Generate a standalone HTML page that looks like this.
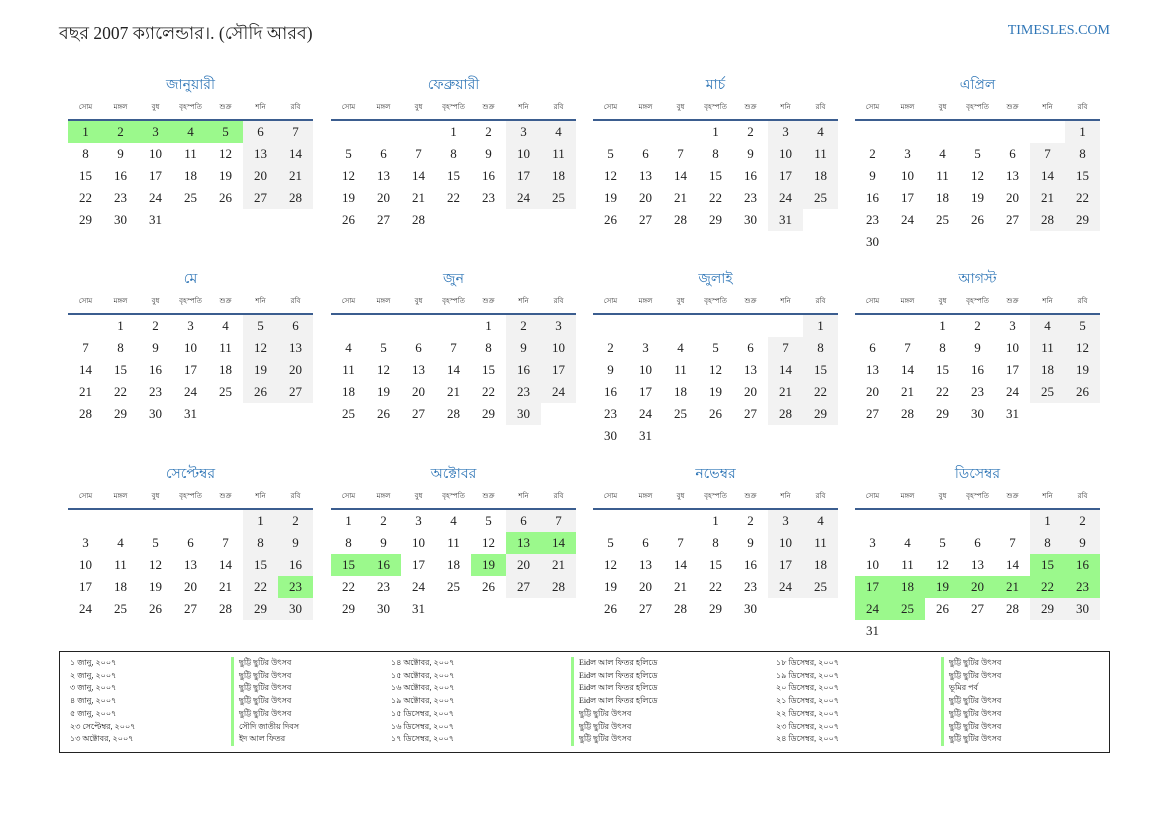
<!DOCTYPE html>
<html><head><meta charset="utf-8"><style>
body{margin:0;width:1169px;height:827px;background:#fff;position:relative;font-family:"Liberation Serif","Noto Serif CJK SC",serif;color:#222;overflow:hidden}
.t{position:absolute;left:59px;top:21px;font-size:17.5px;color:#222}
.s{position:absolute;right:59px;top:23px;font-size:14px;color:#2e75b6;font-family:"Liberation Serif",serif}
.m{position:absolute;width:245px}
.m h2{margin:0;height:20px;line-height:20px;text-align:center;font-size:14px;font-weight:normal;color:#2e75b6;font-family:"Liberation Sans",sans-serif}
table{border-collapse:collapse;table-layout:fixed;width:245px}
th{height:25px;font-size:7px;font-weight:normal;border-bottom:2px solid #3b5d8f;padding:0;vertical-align:middle;font-family:"Liberation Sans",sans-serif;color:#333}
td{width:35px;height:22px;padding:0;text-align:center;font-size:13px;vertical-align:middle}
td.w{background:#f2f2f2}td.g{background:#9bf98c}
.l{position:absolute;left:59px;top:651px;width:1049px;height:100px;border:1px solid #222;font-size:8px;font-family:"Liberation Serif",sans-serif}
.c{position:absolute;top:5px;line-height:12.7px}
.b div{border-left:3px solid #9bf98c;padding-left:5px}
</style></head><body>
<div class="t">বছর 2007 ক্যালেন্ডার।. (সৌদি আরব)</div>
<div class="s">TIMESLES.COM</div>

<div class="m" style="left:68px;top:74px"><h2>জানুয়ারী</h2><table><tr><th>সোম</th><th>মঙ্গল</th><th>বুধ</th><th>বৃহস্পতি</th><th>শুক্র</th><th>শনি</th><th>রবি</th></tr>
<tr><td class="g">1</td><td class="g">2</td><td class="g">3</td><td class="g">4</td><td class="g">5</td><td class="w">6</td><td class="w">7</td></tr>
<tr><td>8</td><td>9</td><td>10</td><td>11</td><td>12</td><td class="w">13</td><td class="w">14</td></tr>
<tr><td>15</td><td>16</td><td>17</td><td>18</td><td>19</td><td class="w">20</td><td class="w">21</td></tr>
<tr><td>22</td><td>23</td><td>24</td><td>25</td><td>26</td><td class="w">27</td><td class="w">28</td></tr>
<tr><td>29</td><td>30</td><td>31</td><td></td><td></td><td></td><td></td></tr></table></div>

<div class="m" style="left:331px;top:74px"><h2>ফেব্রুয়ারী</h2><table><tr><th>সোম</th><th>মঙ্গল</th><th>বুধ</th><th>বৃহস্পতি</th><th>শুক্র</th><th>শনি</th><th>রবি</th></tr>
<tr><td></td><td></td><td></td><td>1</td><td>2</td><td class="w">3</td><td class="w">4</td></tr>
<tr><td>5</td><td>6</td><td>7</td><td>8</td><td>9</td><td class="w">10</td><td class="w">11</td></tr>
<tr><td>12</td><td>13</td><td>14</td><td>15</td><td>16</td><td class="w">17</td><td class="w">18</td></tr>
<tr><td>19</td><td>20</td><td>21</td><td>22</td><td>23</td><td class="w">24</td><td class="w">25</td></tr>
<tr><td>26</td><td>27</td><td>28</td><td></td><td></td><td></td><td></td></tr></table></div>

<div class="m" style="left:593px;top:74px"><h2>মার্চ</h2><table><tr><th>সোম</th><th>মঙ্গল</th><th>বুধ</th><th>বৃহস্পতি</th><th>শুক্র</th><th>শনি</th><th>রবি</th></tr>
<tr><td></td><td></td><td></td><td>1</td><td>2</td><td class="w">3</td><td class="w">4</td></tr>
<tr><td>5</td><td>6</td><td>7</td><td>8</td><td>9</td><td class="w">10</td><td class="w">11</td></tr>
<tr><td>12</td><td>13</td><td>14</td><td>15</td><td>16</td><td class="w">17</td><td class="w">18</td></tr>
<tr><td>19</td><td>20</td><td>21</td><td>22</td><td>23</td><td class="w">24</td><td class="w">25</td></tr>
<tr><td>26</td><td>27</td><td>28</td><td>29</td><td>30</td><td class="w">31</td><td></td></tr></table></div>

<div class="m" style="left:855px;top:74px"><h2>এপ্রিল</h2><table><tr><th>সোম</th><th>মঙ্গল</th><th>বুধ</th><th>বৃহস্পতি</th><th>শুক্র</th><th>শনি</th><th>রবি</th></tr>
<tr><td></td><td></td><td></td><td></td><td></td><td></td><td class="w">1</td></tr>
<tr><td>2</td><td>3</td><td>4</td><td>5</td><td>6</td><td class="w">7</td><td class="w">8</td></tr>
<tr><td>9</td><td>10</td><td>11</td><td>12</td><td>13</td><td class="w">14</td><td class="w">15</td></tr>
<tr><td>16</td><td>17</td><td>18</td><td>19</td><td>20</td><td class="w">21</td><td class="w">22</td></tr>
<tr><td>23</td><td>24</td><td>25</td><td>26</td><td>27</td><td class="w">28</td><td class="w">29</td></tr>
<tr><td>30</td><td></td><td></td><td></td><td></td><td></td><td></td></tr></table></div>

<div class="m" style="left:68px;top:268px"><h2>মে</h2><table><tr><th>সোম</th><th>মঙ্গল</th><th>বুধ</th><th>বৃহস্পতি</th><th>শুক্র</th><th>শনি</th><th>রবি</th></tr>
<tr><td></td><td>1</td><td>2</td><td>3</td><td>4</td><td class="w">5</td><td class="w">6</td></tr>
<tr><td>7</td><td>8</td><td>9</td><td>10</td><td>11</td><td class="w">12</td><td class="w">13</td></tr>
<tr><td>14</td><td>15</td><td>16</td><td>17</td><td>18</td><td class="w">19</td><td class="w">20</td></tr>
<tr><td>21</td><td>22</td><td>23</td><td>24</td><td>25</td><td class="w">26</td><td class="w">27</td></tr>
<tr><td>28</td><td>29</td><td>30</td><td>31</td><td></td><td></td><td></td></tr></table></div>

<div class="m" style="left:331px;top:268px"><h2>জুন</h2><table><tr><th>সোম</th><th>মঙ্গল</th><th>বুধ</th><th>বৃহস্পতি</th><th>শুক্র</th><th>শনি</th><th>রবি</th></tr>
<tr><td></td><td></td><td></td><td></td><td>1</td><td class="w">2</td><td class="w">3</td></tr>
<tr><td>4</td><td>5</td><td>6</td><td>7</td><td>8</td><td class="w">9</td><td class="w">10</td></tr>
<tr><td>11</td><td>12</td><td>13</td><td>14</td><td>15</td><td class="w">16</td><td class="w">17</td></tr>
<tr><td>18</td><td>19</td><td>20</td><td>21</td><td>22</td><td class="w">23</td><td class="w">24</td></tr>
<tr><td>25</td><td>26</td><td>27</td><td>28</td><td>29</td><td class="w">30</td><td></td></tr></table></div>

<div class="m" style="left:593px;top:268px"><h2>জুলাই</h2><table><tr><th>সোম</th><th>মঙ্গল</th><th>বুধ</th><th>বৃহস্পতি</th><th>শুক্র</th><th>শনি</th><th>রবি</th></tr>
<tr><td></td><td></td><td></td><td></td><td></td><td></td><td class="w">1</td></tr>
<tr><td>2</td><td>3</td><td>4</td><td>5</td><td>6</td><td class="w">7</td><td class="w">8</td></tr>
<tr><td>9</td><td>10</td><td>11</td><td>12</td><td>13</td><td class="w">14</td><td class="w">15</td></tr>
<tr><td>16</td><td>17</td><td>18</td><td>19</td><td>20</td><td class="w">21</td><td class="w">22</td></tr>
<tr><td>23</td><td>24</td><td>25</td><td>26</td><td>27</td><td class="w">28</td><td class="w">29</td></tr>
<tr><td>30</td><td>31</td><td></td><td></td><td></td><td></td><td></td></tr></table></div>

<div class="m" style="left:855px;top:268px"><h2>আগস্ট</h2><table><tr><th>সোম</th><th>মঙ্গল</th><th>বুধ</th><th>বৃহস্পতি</th><th>শুক্র</th><th>শনি</th><th>রবি</th></tr>
<tr><td></td><td></td><td>1</td><td>2</td><td>3</td><td class="w">4</td><td class="w">5</td></tr>
<tr><td>6</td><td>7</td><td>8</td><td>9</td><td>10</td><td class="w">11</td><td class="w">12</td></tr>
<tr><td>13</td><td>14</td><td>15</td><td>16</td><td>17</td><td class="w">18</td><td class="w">19</td></tr>
<tr><td>20</td><td>21</td><td>22</td><td>23</td><td>24</td><td class="w">25</td><td class="w">26</td></tr>
<tr><td>27</td><td>28</td><td>29</td><td>30</td><td>31</td><td></td><td></td></tr></table></div>

<div class="m" style="left:68px;top:463px"><h2>সেপ্টেম্বর</h2><table><tr><th>সোম</th><th>মঙ্গল</th><th>বুধ</th><th>বৃহস্পতি</th><th>শুক্র</th><th>শনি</th><th>রবি</th></tr>
<tr><td></td><td></td><td></td><td></td><td></td><td class="w">1</td><td class="w">2</td></tr>
<tr><td>3</td><td>4</td><td>5</td><td>6</td><td>7</td><td class="w">8</td><td class="w">9</td></tr>
<tr><td>10</td><td>11</td><td>12</td><td>13</td><td>14</td><td class="w">15</td><td class="w">16</td></tr>
<tr><td>17</td><td>18</td><td>19</td><td>20</td><td>21</td><td class="w">22</td><td class="g">23</td></tr>
<tr><td>24</td><td>25</td><td>26</td><td>27</td><td>28</td><td class="w">29</td><td class="w">30</td></tr></table></div>

<div class="m" style="left:331px;top:463px"><h2>অক্টোবর</h2><table><tr><th>সোম</th><th>মঙ্গল</th><th>বুধ</th><th>বৃহস্পতি</th><th>শুক্র</th><th>শনি</th><th>রবি</th></tr>
<tr><td>1</td><td>2</td><td>3</td><td>4</td><td>5</td><td class="w">6</td><td class="w">7</td></tr>
<tr><td>8</td><td>9</td><td>10</td><td>11</td><td>12</td><td class="g">13</td><td class="g">14</td></tr>
<tr><td class="g">15</td><td class="g">16</td><td>17</td><td>18</td><td class="g">19</td><td class="w">20</td><td class="w">21</td></tr>
<tr><td>22</td><td>23</td><td>24</td><td>25</td><td>26</td><td class="w">27</td><td class="w">28</td></tr>
<tr><td>29</td><td>30</td><td>31</td><td></td><td></td><td></td><td></td></tr></table></div>

<div class="m" style="left:593px;top:463px"><h2>নভেম্বর</h2><table><tr><th>সোম</th><th>মঙ্গল</th><th>বুধ</th><th>বৃহস্পতি</th><th>শুক্র</th><th>শনি</th><th>রবি</th></tr>
<tr><td></td><td></td><td></td><td>1</td><td>2</td><td class="w">3</td><td class="w">4</td></tr>
<tr><td>5</td><td>6</td><td>7</td><td>8</td><td>9</td><td class="w">10</td><td class="w">11</td></tr>
<tr><td>12</td><td>13</td><td>14</td><td>15</td><td>16</td><td class="w">17</td><td class="w">18</td></tr>
<tr><td>19</td><td>20</td><td>21</td><td>22</td><td>23</td><td class="w">24</td><td class="w">25</td></tr>
<tr><td>26</td><td>27</td><td>28</td><td>29</td><td>30</td><td></td><td></td></tr></table></div>

<div class="m" style="left:855px;top:463px"><h2>ডিসেম্বর</h2><table><tr><th>সোম</th><th>মঙ্গল</th><th>বুধ</th><th>বৃহস্পতি</th><th>শুক্র</th><th>শনি</th><th>রবি</th></tr>
<tr><td></td><td></td><td></td><td></td><td></td><td class="w">1</td><td class="w">2</td></tr>
<tr><td>3</td><td>4</td><td>5</td><td>6</td><td>7</td><td class="w">8</td><td class="w">9</td></tr>
<tr><td>10</td><td>11</td><td>12</td><td>13</td><td>14</td><td class="g">15</td><td class="g">16</td></tr>
<tr><td class="g">17</td><td class="g">18</td><td class="g">19</td><td class="g">20</td><td class="g">21</td><td class="g">22</td><td class="g">23</td></tr>
<tr><td class="g">24</td><td class="g">25</td><td>26</td><td>27</td><td>28</td><td class="w">29</td><td class="w">30</td></tr>
<tr><td>31</td><td></td><td></td><td></td><td></td><td></td><td></td></tr></table></div>

<div class="l">
<div class="c" style="left:10px"><div>১ জানু, ২০০৭</div><div>২ জানু, ২০০৭</div><div>৩ জানু, ২০০৭</div><div>৪ জানু, ২০০৭</div><div>৫ জানু, ২০০৭</div><div>২৩ সেপ্টেম্বর, ২০০৭</div><div>১৩ অক্টোবর, ২০০৭</div></div>
<div class="c b" style="left:171px"><div>ছুট্টি ছুটির উৎসব</div><div>ছুট্টি ছুটির উৎসব</div><div>ছুট্টি ছুটির উৎসব</div><div>ছুট্টি ছুটির উৎসব</div><div>ছুট্টি ছুটির উৎসব</div><div>সৌদি জাতীয় দিবস</div><div>ইদ আল ফিতর</div></div>
<div class="c" style="left:331px"><div>১৪ অক্টোবর, ২০০৭</div><div>১৫ অক্টোবর, ২০০৭</div><div>১৬ অক্টোবর, ২০০৭</div><div>১৯ অক্টোবর, ২০০৭</div><div>১৫ ডিসেম্বর, ২০০৭</div><div>১৬ ডিসেম্বর, ২০০৭</div><div>১৭ ডিসেম্বর, ২০০৭</div></div>
<div class="c b" style="left:511px"><div>Eidল আল ফিতর হলিডে</div><div>Eidল আল ফিতর হলিডে</div><div>Eidল আল ফিতর হলিডে</div><div>Eidল আল ফিতর হলিডে</div><div>ছুট্টি ছুটির উৎসব</div><div>ছুট্টি ছুটির উৎসব</div><div>ছুট্টি ছুটির উৎসব</div></div>
<div class="c" style="left:716px"><div>১৮ ডিসেম্বর, ২০০৭</div><div>১৯ ডিসেম্বর, ২০০৭</div><div>২০ ডিসেম্বর, ২০০৭</div><div>২১ ডিসেম্বর, ২০০৭</div><div>২২ ডিসেম্বর, ২০০৭</div><div>২৩ ডিসেম্বর, ২০০৭</div><div>২৪ ডিসেম্বর, ২০০৭</div></div>
<div class="c b" style="left:881px"><div>ছুট্টি ছুটির উৎসব</div><div>ছুট্টি ছুটির উৎসব</div><div>ভূমির পর্ব</div><div>ছুট্টি ছুটির উৎসব</div><div>ছুট্টি ছুটির উৎসব</div><div>ছুট্টি ছুটির উৎসব</div><div>ছুট্টি ছুটির উৎসব</div></div>
</div>
</body></html>
